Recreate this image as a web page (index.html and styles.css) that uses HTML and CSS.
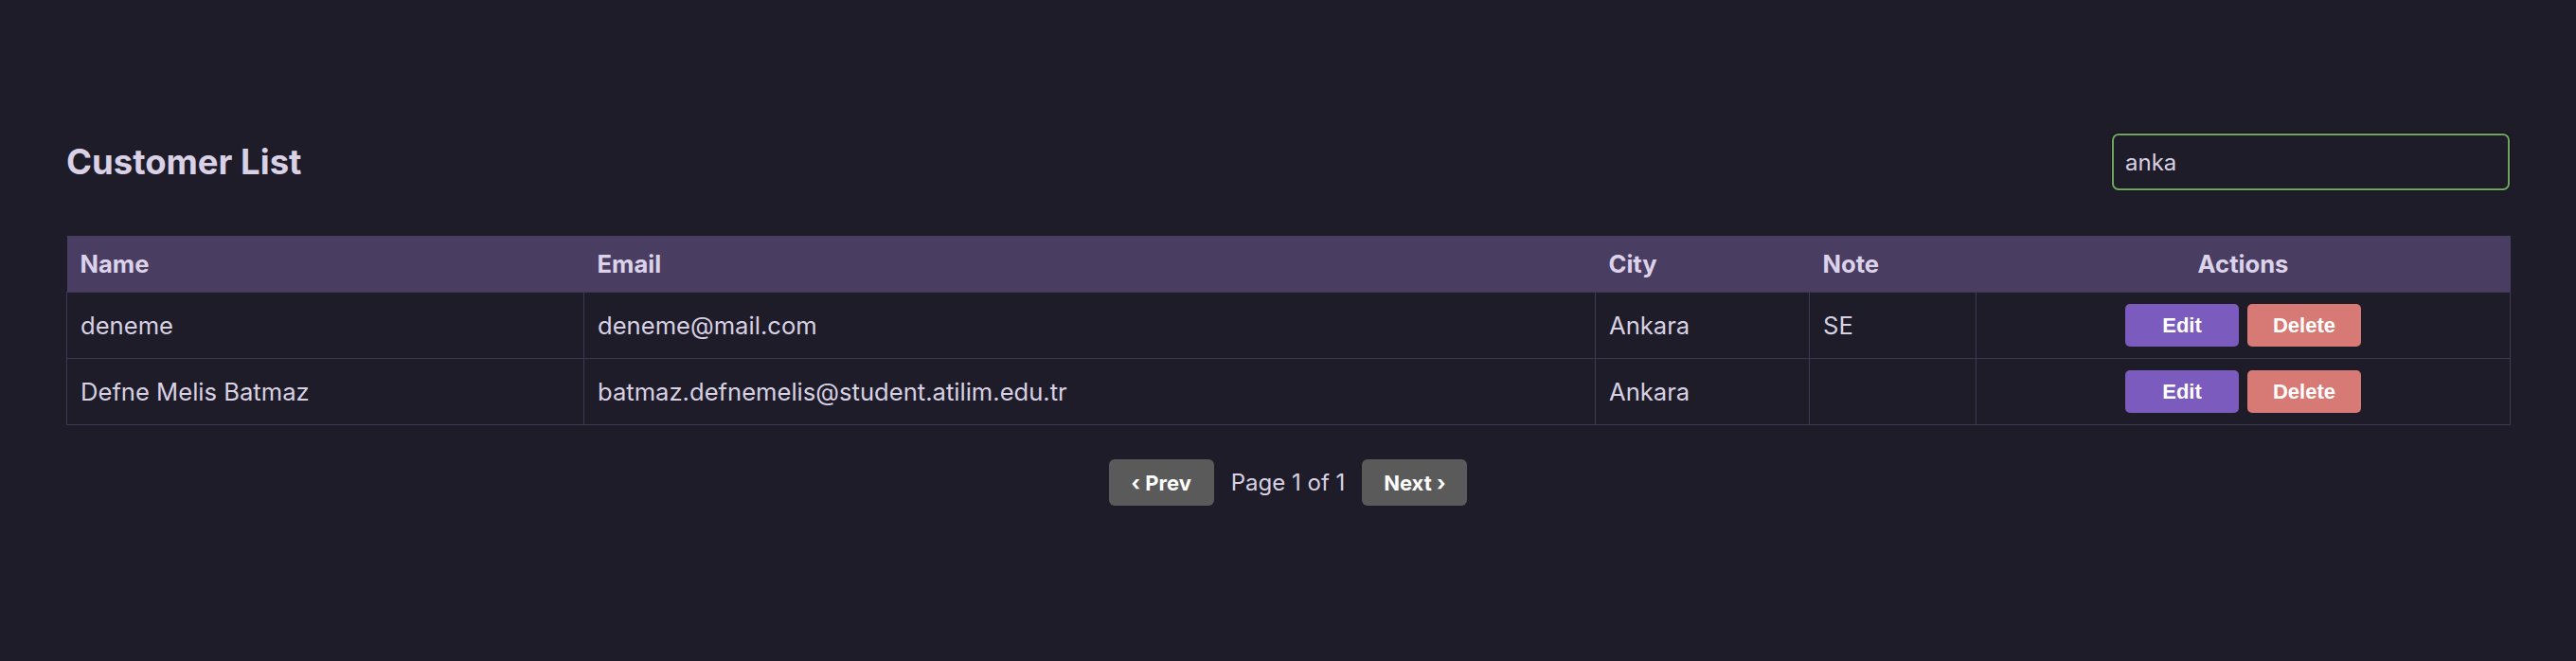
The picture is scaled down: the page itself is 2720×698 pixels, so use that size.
FILE: index.html
```html
<!DOCTYPE html>
<html lang="en">
<head>
<meta charset="utf-8">
<title>Customer List</title>
<link rel="stylesheet" href="styles.css">
</head>
<body>
<div class="page">
  <div class="topbar">
    <h2 class="title">Customer List</h2>
    <input class="search" type="text" value="anka">
  </div>
  <table class="table">
    <colgroup>
      <col class="c-name">
      <col class="c-email">
      <col class="c-city">
      <col class="c-note">
      <col class="c-actions">
    </colgroup>
    <thead>
      <tr>
        <th>Name</th>
        <th>Email</th>
        <th>City</th>
        <th>Note</th>
        <th class="center">Actions</th>
      </tr>
    </thead>
    <tbody>
      <tr>
        <td>deneme</td>
        <td>deneme@mail.com</td>
        <td>Ankara</td>
        <td>SE</td>
        <td class="center"><div class="actions"><button class="btn edit">Edit</button><button class="btn delete">Delete</button></div></td>
      </tr>
      <tr>
        <td>Defne Melis Batmaz</td>
        <td>batmaz.defnemelis@student.atilim.edu.tr</td>
        <td>Ankara</td>
        <td></td>
        <td class="center"><div class="actions"><button class="btn edit">Edit</button><button class="btn delete">Delete</button></div></td>
      </tr>
    </tbody>
  </table>
  <div class="pager">
    <button class="pbtn">‹ Prev</button>
    <span class="pinfo">Page 1 of 1</span>
    <button class="pbtn">Next ›</button>
  </div>
</div>
</body>
</html>
```

FILE: styles.css
```css
html, body {
  margin: 0;
  padding: 0;
  background: #1e1c28;
}
body {
  font-family: Inter, "Noto Sans", sans-serif;
  color: #d8d1e4;
}
.page {
  padding: 141px 70px 0;
}
.topbar {
  display: flex;
  align-items: center;
  justify-content: space-between;
}
.title {
  margin: 0;
  font-size: 36.5px;
  font-weight: 700;
  color: #d9d1e6;
}
.search {
  box-sizing: border-box;
  width: 420px;
  height: 60px;
  padding: 0 12px;
  background: #1e1c28;
  border: 2px solid #6fa55e;
  border-radius: 7px;
  box-shadow: 0 0 0 1px rgba(0, 0, 0, 0.35);
  color: #d8d1e4;
  font-family: Inter, sans-serif;
  font-size: 24px;
  outline: none;
}
.table {
  margin-top: 48px;
  width: 100%;
  border-collapse: collapse;
  table-layout: fixed;
  font-size: 25.6px;
}
.c-name { width: 546px; }
.c-email { width: 1068px; }
.c-city { width: 226px; }
.c-note { width: 176px; }
.c-actions { width: 564px; }
.table th {
  background: #4a3d62;
  color: #dcd3ea;
  font-weight: 700;
  text-align: left;
  padding: 15px 14px;
  line-height: 29px;
}
.table td {
  border: 1px solid #3e3852;
  padding: 12px 14px;
  line-height: 29px;
  vertical-align: middle;
  color: #d8d1e4;
}
.table th.center, .table td.center {
  text-align: center;
}
.actions {
  display: flex;
  justify-content: center;
  gap: 9px;
}
.btn {
  width: 120px;
  height: 45px;
  border: none;
  border-radius: 5px;
  color: #ffffff;
  font-family: "Liberation Sans", Arial, sans-serif;
  font-weight: 700;
  font-size: 22px;
  padding: 0;
}
.edit { background: #7b5bbd; }
.delete { background: #d77974; }
.pager {
  margin-top: 36px;
  display: flex;
  justify-content: center;
  align-items: center;
  gap: 18px;
}
.pbtn {
  width: 111px;
  height: 49px;
  border: none;
  border-radius: 6px;
  background: #5a5a5a;
  color: #ffffff;
  font-family: Inter, sans-serif;
  font-weight: 700;
  font-size: 22px;
  padding: 0;
}
.pinfo {
  font-size: 24px;
  color: #d8d1e4;
}
```
